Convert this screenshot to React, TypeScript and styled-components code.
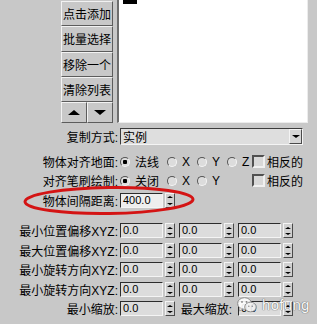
import React from 'react';
import styled, { createGlobalStyle } from 'styled-components';

const GlobalStyle = createGlobalStyle`
  html, body {
    margin: 0;
    padding: 0;
    background: #c8c8c8;
  }
  body {
    font-family: "Liberation Sans", "Noto Sans CJK SC", sans-serif;
    font-size: 12px;
    color: #000;
  }
`;

const Panel = styled.div`
  position: relative;
  width: 317px;
  height: 324px;
  overflow: hidden;
  background: #c8c8c8;
`;

const Top = styled.div`
  display: flex;
  height: 123px;
  padding-left: 61px;
`;

const ButtonColumn = styled.div`
  width: 52px;
  padding-top: 1px;
  display: flex;
  flex-direction: column;
`;

const ToolButton = styled.div<{ $h?: number }>`
  height: ${p => p.$h ?? 24}px;
  box-sizing: border-box;
  display: flex;
  align-items: center;
  justify-content: center;
  flex: 1;
  border: 1px solid;
  border-color: #f2f2f2 #5c5c5c #5c5c5c #f2f2f2;
  background: #c8c8c8;
  white-space: nowrap;
`;

const ArrowRow = styled.div`
  display: flex;
  height: 21px;
`;

const Tri = styled.span<{ $up?: boolean; $size?: number }>`
  width: 0;
  height: 0;
  border-left: ${p => p.$size ?? 6}px solid transparent;
  border-right: ${p => p.$size ?? 6}px solid transparent;
  ${p => (p.$up ? 'border-bottom' : 'border-top')}: ${p => (p.$size ?? 6) - 1}px solid #000;
`;

const ListBox = styled.div`
  margin-left: 4px;
  width: 191px;
  height: 123px;
  box-sizing: border-box;
  background: #fff;
  border-left: 2px solid #6e6e6e;
  border-right: 1px solid #ececec;
  border-bottom: 1px solid #ececec;
`;

const Selection = styled.div`
  margin-left: 4px;
  width: 14px;
  height: 4px;
  background: #000;
`;

const Form = styled.div`
  display: flex;
  flex-direction: column;
  padding-top: 5px;
`;

const Row = styled.div<{ $h: number; $mt?: number }>`
  display: grid;
  grid-template-columns: 118px auto;
  column-gap: 2px;
  align-items: center;
  height: ${p => p.$h}px;
  margin-top: ${p => p.$mt ?? 0}px;
`;

const Label = styled.span`
  text-align: right;
  white-space: nowrap;
`;

const Combo = styled.div`
  width: 183px;
  height: 17px;
  box-sizing: border-box;
  display: flex;
  align-items: center;
  justify-content: space-between;
  border: 1px solid;
  border-color: #3c3c3c #f4f4f4 #f4f4f4 #3c3c3c;
  background: #dedede;
  padding-left: 2px;
`;

const ComboButton = styled.div`
  width: 13px;
  height: 15px;
  box-sizing: border-box;
  display: flex;
  align-items: center;
  justify-content: center;
  border: 1px solid;
  border-color: #f4f4f4 #4a4a4a #4a4a4a #f4f4f4;
  background: #d6d6d6;
`;

const Options = styled.div`
  display: grid;
  grid-template-columns: 47px 30px 30px 25px auto;
  align-items: center;
`;

const Option = styled.div`
  display: flex;
  align-items: center;
  gap: 5px;
  white-space: nowrap;
`;

const Radio = styled.span<{ $on?: boolean }>`
  width: 10px;
  height: 10px;
  box-sizing: border-box;
  border-radius: 50%;
  border: 1px solid;
  border-color: #555 #f4f4f4 #f4f4f4 #555;
  background: ${p => (p.$on ? 'radial-gradient(circle, #000 0 2px, #dcdcdc 2.5px)' : '#dcdcdc')};
`;

const Check = styled.div`
  display: flex;
  align-items: center;
  gap: 2px;
  white-space: nowrap;
`;

const CheckBox = styled.span`
  width: 13px;
  height: 13px;
  box-sizing: border-box;
  border: 2px solid;
  border-color: #505050 #f0f0f0 #f0f0f0 #505050;
  background: #d8d8d8;
`;

const Fields = styled.div`
  display: flex;
  align-items: center;
  gap: 4px;
`;

const SpinGroup = styled.div`
  display: flex;
  align-items: center;
  gap: 2px;
`;

const NumField = styled.div<{ $light?: boolean }>`
  width: 43px;
  height: 15px;
  box-sizing: border-box;
  border: 1px solid;
  border-color: #2c2c2c #f4f4f4 #f4f4f4 #2c2c2c;
  background: ${p => (p.$light ? '#eeeeee' : '#dcdcdc')};
  padding-left: 2px;
  font-size: 11px;
  line-height: 13px;
`;

const Spinner = styled.div`
  width: 10px;
  height: 15px;
  box-sizing: border-box;
  display: flex;
  flex-direction: column;
  justify-content: space-around;
  align-items: center;
  border: 1px solid;
  border-color: #f4f4f4 #4a4a4a #4a4a4a #f4f4f4;
  background: #d0d0d0;
`;

const SlotLabel = styled.span`
  width: 55px;
  box-sizing: border-box;
  padding-right: 2px;
  text-align: right;
  white-space: nowrap;
`;

const Watermark = styled.div`
  position: absolute;
  left: 237px;
  top: 296px;
  display: flex;
  align-items: center;
  gap: 5px;
  opacity: 0.9;
`;

const MarkText = styled.span`
  font-family: "Liberation Sans", sans-serif;
  font-size: 15px;
  color: #fff;
  letter-spacing: 0.3px;
  text-shadow: 0 0 1px #555, 0 0 1px #555;
`;

const Annotation = styled.svg`
  position: absolute;
  left: 0;
  top: 0;
  pointer-events: none;
`;

const Spin = ({ value, light }: { value: string; light?: boolean }) => (
  <SpinGroup>
    <NumField $light={light}>{value}</NumField>
    <Spinner>
      <Tri $up $size={3} />
      <Tri $size={3} />
    </Spinner>
  </SpinGroup>
);

const xyzRows = ['最小位置偏移XYZ:', '最大位置偏移XYZ:', '最小旋转方向XYZ:', '最小旋转方向XYZ:'];

const App = () => (
  <Panel>
    <GlobalStyle />
    <Top>
      <ButtonColumn>
        <ToolButton>点击添加</ToolButton>
        <ToolButton>批量选择</ToolButton>
        <ToolButton>移除一个</ToolButton>
        <ToolButton>清除列表</ToolButton>
        <ArrowRow>
          <ToolButton $h={21}><Tri $up /></ToolButton>
          <ToolButton $h={21}><Tri /></ToolButton>
        </ArrowRow>
      </ButtonColumn>
      <ListBox>
        <Selection />
      </ListBox>
    </Top>

    <Form>
      <Row $h={17}>
        <Label>复制方式:</Label>
        <Combo>
          <span>实例</span>
          <ComboButton><Tri $size={4} /></ComboButton>
        </Combo>
      </Row>

      <Row $h={19} $mt={7}>
        <Label>物体对齐地面:</Label>
        <Options>
          <Option><Radio $on />法线</Option>
          <Option><Radio />X</Option>
          <Option><Radio />Y</Option>
          <Option><Radio />Z</Option>
          <Check><CheckBox />相反的</Check>
        </Options>
      </Row>

      <Row $h={19}>
        <Label>对齐笔刷绘制:</Label>
        <Options>
          <Option><Radio $on />关闭</Option>
          <Option><Radio />X</Option>
          <Option><Radio />Y</Option>
          <span />
          <Check><CheckBox />相反的</Check>
        </Options>
      </Row>

      <Row $h={21}>
        <Label>物体间隔距离:</Label>
        <Fields>
          <Spin value="400.0" light />
        </Fields>
      </Row>

      {xyzRows.map((label, i) => (
        <Row key={i} $h={19.5} $mt={i === 0 ? 10 : 0}>
          <Label>{label}</Label>
          <Fields>
            <Spin value="0.0" />
            <Spin value="0.0" />
            <Spin value="0.0" />
          </Fields>
        </Row>
      ))}

      <Row $h={19.5}>
        <Label>最小缩放:</Label>
        <Fields>
          <Spin value="0.0" />
          <SlotLabel>最大缩放:</SlotLabel>
          <Spin value="0.0" />
        </Fields>
      </Row>
    </Form>

    <Watermark>
      <svg width="20" height="16" viewBox="0 0 20 16">
        <ellipse cx="7.5" cy="6.5" rx="7" ry="5.8" fill="#fff" stroke="#8a8a8a" strokeWidth="1" />
        <path d="M3 11 L2.5 14 L6 12" fill="#fff" stroke="#8a8a8a" strokeWidth="0.8" />
        <ellipse cx="13.5" cy="10" rx="5.8" ry="4.8" fill="#f4f4f4" stroke="#8a8a8a" strokeWidth="1" />
        <circle cx="5" cy="5" r="0.9" fill="#8a8a8a" />
        <circle cx="9.5" cy="5" r="0.9" fill="#8a8a8a" />
        <circle cx="11.8" cy="9.3" r="0.8" fill="#8a8a8a" />
        <circle cx="15.3" cy="9.3" r="0.8" fill="#8a8a8a" />
      </svg>
      <MarkText>hofung</MarkText>
    </Watermark>

    <Annotation width="317" height="324" viewBox="0 0 317 324">
      <ellipse cx="109" cy="200.5" rx="84" ry="13" fill="none" stroke="#d41414" strokeWidth="3" transform="rotate(-0.8 109 200.5)" />
    </Annotation>
  </Panel>
);

export default App;
